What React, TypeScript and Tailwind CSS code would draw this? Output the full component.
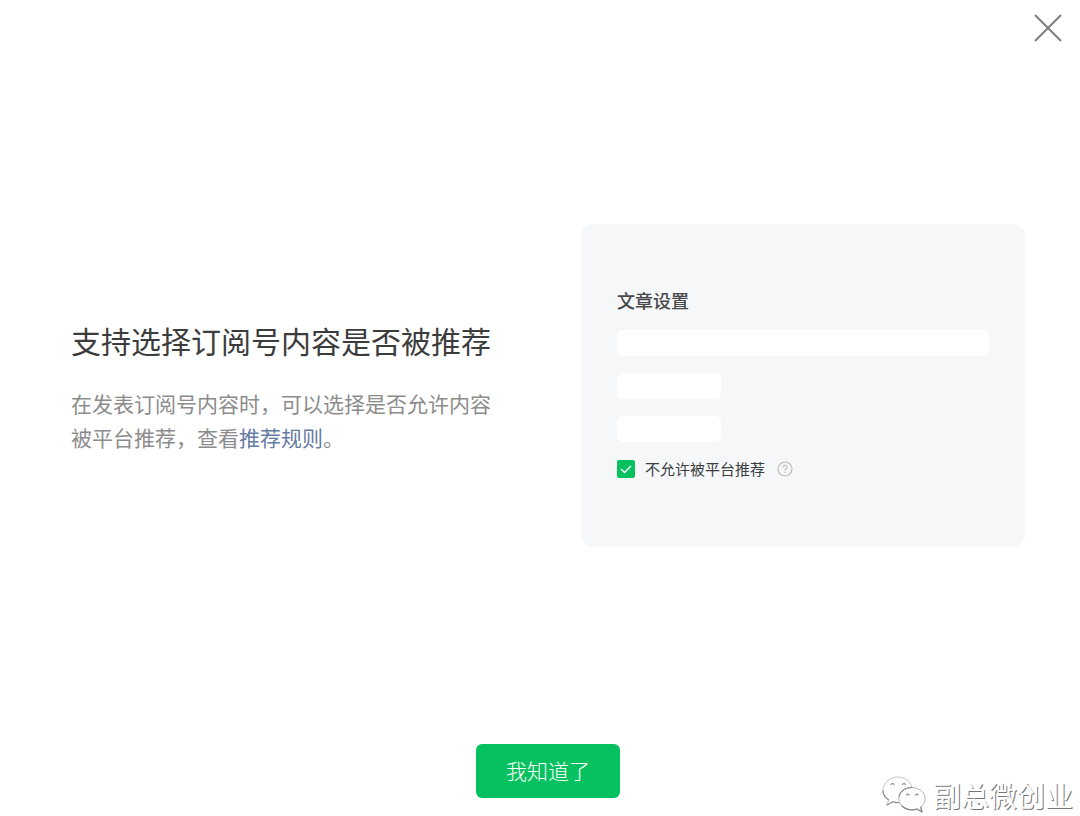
import { useState } from "react";

const CloseIcon = () => (
    <svg viewBox="0 0 28 28" className="h-7 w-7" fill="none" stroke="#7c7c7c" strokeWidth="1.8" aria-hidden="true">
        <path d="M1 1l26 26M27 1L1 27" />
    </svg>
);

const HelpIcon = () => (
    <svg viewBox="0 0 16 16" className="h-4 w-4" fill="none" stroke="#b9bcc0" strokeWidth="1.2" aria-hidden="true">
        <circle cx="8" cy="8" r="7" />
        <path d="M6 6.5a2 2 0 1 1 3 1.6c-.7.4-1 .7-1 1.4" />
        <path d="M8 10.7v1.2" />
    </svg>
);

// two chat bubbles, white with a grey edge that is darker at the bottom
const BubblesLogo = () => (
    <svg viewBox="0 0 44 38" className="h-[38px] w-11" fill="#fff" strokeLinecap="round" strokeLinejoin="round" aria-hidden="true">
        <path
            d="M17 26.500c-2 .3-4 0-6-.7L5 29l1.500-5.200C3 21.500 1 18.200 1 14.500 1 7.600 7.500 1 15.500 1 22.500 1 28.500 5 30 11.500"
            stroke="#c4c4c4"
            strokeWidth="1"
        />
        <path d="M5 29l6-3.200c2 .7 4 1 6 .7M6.500 23.800C3 21.500 1 18.200 1 14.500" fill="none" stroke="#8f8f8f" strokeWidth="1.200" />
        <path d="M9 8.500q1.500-2 3 0M20.500 8.500q1.500-2 3 0" fill="none" stroke="#8a8a8a" strokeWidth="1.200" />
        <path
            d="M30 11.500c7.400 0 13.200 5 13.200 11.200 0 3.400-1.700 6.300-4.500 8.300l1.300 5-5-3c-1.600.6-3.200.8-5 .8-7.400 0-13.200-4.900-13.200-11S22.600 11.500 30 11.500z"
            stroke="#b4b4b4"
            strokeWidth="1"
        />
        <path d="M17 20c1.800-5 6.500-8.500 13-8.500M20 30c2.500 2.400 6 3.800 10 3.800 1.800 0 3.400-.2 5-.8l5 3-1.300-5" fill="none" stroke="#8a8a8a" strokeWidth="1.200" />
        <path d="M24.500 19q1.300-1.800 2.600 0M33.500 19q1.300-1.800 2.600 0" fill="none" stroke="#8a8a8a" strokeWidth="1.200" />
    </svg>
);

const SettingsPreview = () => {
    const [blocked, setBlocked] = useState(true);

    return (
        <section className="w-[444px] shrink-0 rounded-xl bg-[#f5f7f9] px-9 pt-16 pb-[66px]">
            <h2 className="text-[18px] leading-6 font-medium text-[#48494b]">文章设置</h2>
            <div className="mt-[18px] flex flex-col gap-[17px]">
                <div className="h-[26px] rounded-md bg-white" />
                <div className="h-[26px] w-[104px] rounded-md bg-white" />
                <div className="h-[26px] w-[104px] rounded-md bg-white" />
            </div>
            <div className="mt-[15px] flex h-6 items-center gap-3">
                <label className="flex items-center gap-2.5 text-[15px] leading-6 text-[#3c3d3f]">
                    <span className="grid h-[18px] w-[18px] place-items-center">
                        <input
                            type="checkbox"
                            checked={blocked}
                            onChange={(e) => setBlocked(e.target.checked)}
                            className="col-start-1 row-start-1 h-[18px] w-[18px] appearance-none rounded-xs border border-gray-300 bg-white checked:border-[#07c160] checked:bg-[#07c160]"
                        />
                        {blocked && (
                            <svg viewBox="0 0 18 18" className="pointer-events-none col-start-1 row-start-1 h-[18px] w-[18px]" fill="none" stroke="#fff" strokeWidth="1.5" aria-hidden="true">
                                <path d="M4 9l3.500 3.500L14 6" />
                            </svg>
                        )}
                    </span>
                    不允许被平台推荐
                </label>
                <button type="button" aria-label="帮助">
                    <HelpIcon />
                </button>
            </div>
        </section>
    );
};

const App = () => {
    return (
        <div className="relative flex min-h-screen flex-col bg-white font-['Noto_Sans_CJK_SC',sans-serif]">
            <header className="flex h-14 items-center justify-end px-[18px]">
                <button type="button" aria-label="关闭">
                    <CloseIcon />
                </button>
            </header>

            <main className="flex flex-1 items-center justify-between pr-[55px] pl-[71px]">
                <div className="w-[424px]">
                    <h1 className="text-[30px] leading-[44px] whitespace-nowrap text-[#3c3c3c]">支持选择订阅号内容是否被推荐</h1>
                    <p className="mt-6 text-[21px] leading-[34px] font-normal text-[#8c8c8c]">
                        在发表订阅号内容时，可以选择是否允许内容
                        <br />
                        被平台推荐，查看
                        <a href="#rules" className="text-[#667ba3]">推荐规则</a>。
                    </p>
                </div>
                <SettingsPreview />
            </main>

            <footer className="flex justify-center pt-[29px] pr-[55px] pb-[18px] pl-[71px]">
                <button type="button" className="h-[54px] w-36 rounded-md bg-[#07c160] text-[21px] font-light text-white">
                    我知道了
                </button>
            </footer>

            <div className="absolute right-[7px] bottom-px flex items-center gap-[7px]">
                <BubblesLogo />
                <span className="text-[28px] leading-10 text-white [text-shadow:1px_1px_0_#777]">副总微创业</span>
            </div>
        </div>
    );
};

export default App;
